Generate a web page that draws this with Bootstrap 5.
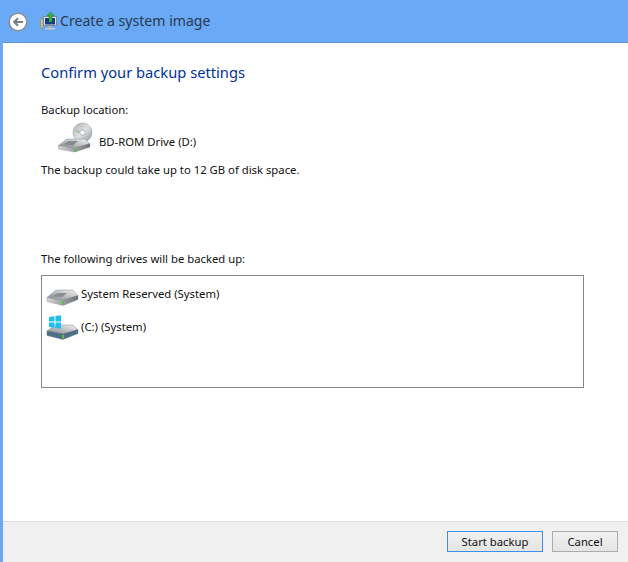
<!DOCTYPE html>
<html lang="en">
<head>
    <meta charset="UTF-8">
    <title>Create a system image</title>
    <link href="https://cdn.jsdelivr.net/npm/bootstrap@5.3.0/dist/css/bootstrap.min.css" rel="stylesheet">
    <style>
        html, body { height: 100%; overflow: hidden; }
        body { background: #69a9f5; font-family: "Noto Sans", "Open Sans", sans-serif; font-size: 11.3px; color: #111; }
        .wiz-shell { height: 562px; }
        .wiz-title { height: 42px; padding-left: 8px; color: #2b3a4d; font-size: 14.1px; }
        .back-icon { margin-right: 12px; margin-top: 2px; }
        .prog-icon { margin-right: 3px; }
        .wiz-body { border-top: 1px solid #5c94d6; margin-left: 3px; background: #fff; }
        .wiz-main { padding: 19px 0 0 38px; }
        .wiz-heading { color: #003399; font-size: 14.7px; font-weight: 400; line-height: 20px; margin: 0 0 20px; }
        .wiz-line { line-height: 16px; }
        .loc-row { padding-left: 17px; height: 32px; margin-top: 4px; }
        .loc-row span { margin-top: 8px; }
        .note-line { margin-top: 8px; margin-bottom: 73px; }
        .drive-box { width: 543px; height: 113px; border: 1px solid #828790; margin-top: 8px; padding: 5px 0 0 4px; }
        .drive-row { height: 33px; }
        .drive-name { margin-top: 5px; }
        .wiz-foot { height: 41px; background: #f0f0f0; border-top: 1px solid #dfdfdf; padding: 9px 10px 0 0; }
        .wiz-btn { height: 21px; padding: 0; font-size: 11.3px; line-height: 17px; border-radius: 0; color: #111; background: linear-gradient(#f0f0f0, #e5e5e5); border: 1px solid #acacac; }
        .wiz-btn:hover { color: #111; }
        .btn-start { width: 96px; border: 1px solid #3d8fe8; margin-right: 9px; }
        .btn-cancel { width: 66px; }
    </style>
</head>
<body>
    <div class="wiz-shell d-flex flex-column">
        <div class="wiz-title d-flex align-items-center">
            <svg width="20" height="20" viewBox="0 0 20 20" class="back-icon">
                <circle cx="10" cy="10" r="8.800" fill="#fff" stroke="#8a8f96" stroke-width="1.600"/>
                <path d="M15 10H7M10 6.200 6.200 10 10 13.800" fill="none" stroke="#7a7f86" stroke-width="2.200"/>
            </svg>
            <svg width="17" height="18" viewBox="0 0 17 18" class="prog-icon">
                <rect x="3.500" y="4.500" width="13" height="9" fill="#dfe3e7" stroke="#7d8a96"/>
                <rect x="5" y="6" width="10" height="6.500" fill="#163a8c"/>
                <rect x="0.500" y="7" width="2.500" height="9" fill="#c9c49a" stroke="#8a8a6a" stroke-width=".6"/>
                <rect x="8" y="14" width="4" height="2" fill="#a9b0b6"/>
                <rect x="5" y="16" width="10" height="1.500" fill="#c6ccd2"/>
                <path d="M9 10V3.500H7L10.500 0 14 3.500H12V10z" fill="#3fae3c" stroke="#1f7a2a" stroke-width=".5"/>
            </svg>
            <span>Create a system image</span>
        </div>
        <div class="wiz-body flex-grow-1 d-flex flex-column">
            <div class="wiz-main flex-grow-1">
                <h1 class="wiz-heading">Confirm your backup settings</h1>
                <div class="wiz-line">Backup location:</div>
                <div class="loc-row d-flex align-items-center">
                    <svg width="41" height="32" viewBox="0 0 41 32">
                        <defs>
                            <linearGradient id="discg" x1="0" y1="0" x2="1" y2="1"><stop offset="0" stop-color="#a9adb1"/><stop offset=".5" stop-color="#dfe2e4"/><stop offset="1" stop-color="#8f9397"/></linearGradient>
                            <linearGradient id="hddtop" x1="0" y1="1" x2="1" y2="0"><stop offset="0" stop-color="#7f8386"/><stop offset="1" stop-color="#f2f3f4"/></linearGradient>
                            <linearGradient id="hddfront" x1="0" y1="0" x2="1" y2="0"><stop offset="0" stop-color="#d2d4d6"/><stop offset="1" stop-color="#6c7074"/></linearGradient>
                        </defs>
                        <circle cx="24.500" cy="10.500" r="9.500" fill="url(#discg)" stroke="#8f9397" stroke-width=".5"/>
                        <circle cx="24.500" cy="10.500" r="2.600" fill="#fff" stroke="#8a9096" stroke-width=".6"/>
                        <path d="M17.500 8l4 1.500-.8 1.500z" fill="#74c46a"/>
                        <path d="M.5 23.500 9 17H27L32 22 17 27Z" fill="url(#hddtop)" stroke="#8a8d90" stroke-width=".5" stroke-linejoin="round"/>
                        <path d="M.5 23.500 17 26 32 21.500V25L17 30 .5 27Z" fill="url(#hddfront)" stroke="#7f8386" stroke-width=".4" stroke-linejoin="round"/>
                        <path d="M5 22.500 11 19H20L15 23.500Z" fill="#85898c"/>
                        <rect x="16" y="26.500" width="2" height="3" fill="#58c23c"/>
                    </svg>
                    <span>BD-ROM Drive (D:)</span>
                </div>
                <div class="wiz-line note-line">The backup could take up to 12 GB of disk space.</div>
                <div class="wiz-line">The following drives will be backed up:</div>
                <div class="drive-box">
                    <div class="drive-row d-flex">
                        <svg width="35" height="27" viewBox="0 0 35 27">
                            <path d="M1 16.500 10 9H27L32 15 17 20Z" fill="url(#hddtop)" stroke="#8a8d90" stroke-width=".5" stroke-linejoin="round"/>
                            <path d="M1 16.500 17 19 32 14.500V18.500L17 24.500 1 20.500Z" fill="url(#hddfront)" stroke="#7f8386" stroke-width=".4" stroke-linejoin="round"/>
                            <path d="M6 15.500 12 12H21L16 16Z" fill="#8a8e91"/>
                            <rect x="16" y="20" width="2" height="3.500" fill="#58c23c"/>
                        </svg>
                        <span class="drive-name">System Reserved (System)</span>
                    </div>
                    <div class="drive-row d-flex">
                        <svg width="35" height="27" viewBox="0 0 35 27">
                            <path d="M1 17 10 11H27L32 16 17 21Z" fill="url(#hddtop)" stroke="#8a8d90" stroke-width=".5" stroke-linejoin="round"/>
                            <path d="M1 17 17 20 32 15.500V19.500L17 25.500 1 21.500Z" fill="#4d7088" stroke="#5d6a72" stroke-width=".4" stroke-linejoin="round"/>
                            <rect x="16" y="21" width="2" height="3.500" fill="#58c23c"/>
                            <path d="M3 3 8.500 2.200V7.500H3ZM9.500 2 15 1.200V7.500H9.500ZM3 8.500H8.500V13.800L3 13ZM9.500 8.500H15V14.800L9.500 14Z" fill="#1fc0f0"/>
                        </svg>
                        <span class="drive-name">(C:) (System)</span>
                    </div>
                </div>
            </div>
            <div class="wiz-foot d-flex justify-content-end align-items-start">
                <button type="button" class="btn wiz-btn btn-start">Start backup</button>
                <button type="button" class="btn wiz-btn btn-cancel">Cancel</button>
            </div>
        </div>
    </div>
    <script src="https://cdn.jsdelivr.net/npm/bootstrap@5.3.0/dist/js/bootstrap.bundle.min.js"></script>
</body>
</html>
